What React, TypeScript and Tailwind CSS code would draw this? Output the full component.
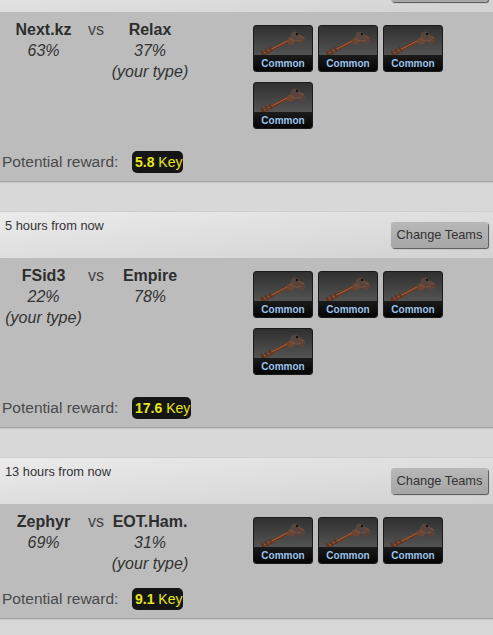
const font = "font-['Liberation_Sans',Arial,sans-serif]"

type Match = {
  when: string
  left: string
  right: string
  leftPct: string
  rightPct: string
  yourSide: "left" | "right"
  keys: number
  reward: string
}

const matches: Match[] = [
  { when: "", left: "Next.kz", right: "Relax", leftPct: "63%", rightPct: "37%", yourSide: "right", keys: 4, reward: "5.8" },
  { when: "5 hours from now", left: "FSid3", right: "Empire", leftPct: "22%", rightPct: "78%", yourSide: "left", keys: 4, reward: "17.6" },
  { when: "13 hours from now", left: "Zephyr", right: "EOT.Ham.", leftPct: "69%", rightPct: "31%", yourSide: "right", keys: 3, reward: "9.1" },
]

const KeyTile = () => (
  <div className="relative w-[60px] h-[47px] rounded-[3px] border border-[#1a1a1a] bg-gradient-to-b from-[#303030] to-[#686868] overflow-hidden">
    <svg width="58" height="32" viewBox="0 0 58 32" className="absolute left-0 top-0">
      <path d="M9 28 L34 15" stroke="#6a3a24" strokeWidth="3.2" strokeLinecap="round" />
      <path d="M10 27 L34 14.5" stroke="#a5623f" strokeWidth="1" />
      <path d="M7 25 l3 5 M11 23 l3 5 M15 21 l3 5" stroke="#5e3522" strokeWidth="2" />
      <circle cx="41" cy="10" r="4.6" fill="#55463f" />
      <circle cx="47" cy="14" r="4.2" fill="#5a4339" />
      <circle cx="37" cy="15" r="3.8" fill="#6a4634" />
      <path d="M36 12 q5 5 11 2 M45 9 q2 2 5 3" stroke="#85533a" strokeWidth="1" fill="none" />
      <circle cx="43" cy="8" r="1.2" fill="#121212" />
    </svg>
    <div className="absolute left-0 right-0 bottom-0 h-[16px] bg-gradient-to-b from-[#1c1c1c] to-[#050505] text-center">
      <span className={`${font} text-[10px] leading-[17px] font-bold text-[#9cc3ea] block`}>Common</span>
    </div>
  </div>
)

const Team = ({ name, pct, yours, className }: { name: string; pct: string; yours: boolean; className: string }) => (
  <div className={`flex flex-col items-center ${className}`}>
    <span className="text-[16px] leading-[18px] font-bold text-[#2e2e2e] whitespace-nowrap">{name}</span>
    <span className="text-[16px] leading-[20px] mt-[2px] italic text-[#333333]">{pct}</span>
    {yours && <span className="text-[16px] leading-[20px] mt-[1px] italic text-[#333333] whitespace-nowrap">(your type)</span>}
  </div>
)

const Panel = ({ m }: { m: Match }) => (
  <div className="bg-[#bcbcbc] border-b border-[#a4a4a4] shadow-[0_1px_1px_rgba(0,0,0,0.08)]">
    <div className="flex items-start pt-[13px]">
      {/* team names sit higher than the tiles and may hang below them */}
      <div className="flex items-start w-[253px] shrink-0 h-[53px] -mt-[4px]">
        <Team name={m.left} pct={m.leftPct} yours={m.yourSide === "left"} className="w-[87px]" />
        <span className="w-[18px] text-center text-[16px] leading-[18px] text-[#444444]">vs</span>
        <Team name={m.right} pct={m.rightPct} yours={m.yourSide === "right"} className="w-[90px]" />
      </div>
      <div className="flex flex-wrap w-[195px] gap-x-[5px] gap-y-[10px]">
        {Array.from({ length: m.keys }).map((_, i) => (
          <KeyTile key={i} />
        ))}
      </div>
    </div>
    <div className="flex items-center pl-[2px] mt-[22px] pb-[8px]">
      <span className="text-[15.5px] leading-[22px] text-[#4a4a4a] w-[130px]">Potential reward:</span>
      <span className="h-[22px] pl-[3px] pr-[1px] rounded-[5px] bg-[#151515] text-[14px] leading-[22px] text-center text-[#e6e619] whitespace-nowrap">
        <b>{m.reward}</b> Key
      </span>
    </div>
  </div>
)

const Header = ({ when }: { when: string }) => (
  <div className="h-[47px] flex justify-between border-t border-[#cfcfcf] bg-gradient-to-br from-[#ebebeb] to-[#d2d2d2]">
    <span className="text-[12.8px] leading-[14px] text-[#333333] pl-[5px] pt-[7px]">{when}</span>
    <button className="self-start mt-[10px] mr-[5px] w-[97px] h-[26px] rounded-[3px] bg-gradient-to-b from-[#b8b8b8] to-[#a6a6a6] text-[12.8px] text-[#333333] shadow-[1px_1px_1px_#555555]">
      {when && "Change Teams"}
    </button>
  </div>
)

export default function App() {
  return (
    <div className={`${font} w-[493px] h-[635px] overflow-hidden bg-[#d8d8d8]`}>
      <div className="-mt-[35px]">
        {matches.map((m, i) => (
          <div key={i} className="mb-[29px]">
            <Header when={m.when} />
            <Panel m={m} />
          </div>
        ))}
      </div>
    </div>
  )
}
